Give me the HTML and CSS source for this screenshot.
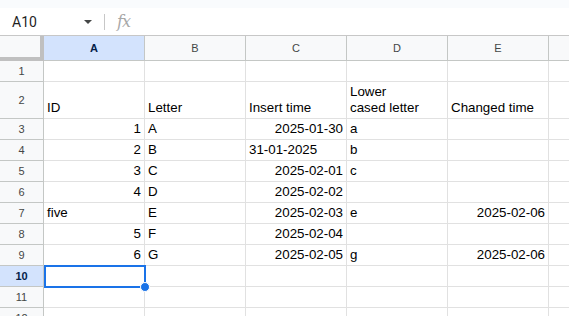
FILE: index.html
```html
<!DOCTYPE html>
<html>
<head>
<meta charset="utf-8">
<link rel="stylesheet" href="styles.css">
</head>
<body>
<div class="strip"></div>
<div class="fbar">
  <div class="namebox"><span class="ref">A10</span><span class="caret"></span></div>
  <div class="sep"></div>
  <div class="fx">fx</div>
</div>
<div class="sheet">
  <div class="corner"></div>
  <div class="ch sel">A</div><div class="ch">B</div><div class="ch">C</div><div class="ch">D</div><div class="ch">E</div><div class="ch"></div>

  <div class="rh">1</div><div class="c"></div><div class="c"></div><div class="c"></div><div class="c"></div><div class="c"></div><div class="c"></div>

  <div class="rh">2</div><div class="c">ID</div><div class="c">Letter</div><div class="c">Insert time</div><div class="c wrap">Lower<br>cased letter</div><div class="c">Changed time</div><div class="c"></div>

  <div class="rh">3</div><div class="c r">1</div><div class="c">A</div><div class="c r">2025-01-30</div><div class="c">a</div><div class="c"></div><div class="c"></div>
  <div class="rh">4</div><div class="c r">2</div><div class="c">B</div><div class="c">31-01-2025</div><div class="c">b</div><div class="c"></div><div class="c"></div>
  <div class="rh">5</div><div class="c r">3</div><div class="c">C</div><div class="c r">2025-02-01</div><div class="c">c</div><div class="c"></div><div class="c"></div>
  <div class="rh">6</div><div class="c r">4</div><div class="c">D</div><div class="c r">2025-02-02</div><div class="c"></div><div class="c"></div><div class="c"></div>
  <div class="rh">7</div><div class="c">five</div><div class="c">E</div><div class="c r">2025-02-03</div><div class="c">e</div><div class="c r">2025-02-06</div><div class="c"></div>
  <div class="rh">8</div><div class="c r">5</div><div class="c">F</div><div class="c r">2025-02-04</div><div class="c"></div><div class="c"></div><div class="c"></div>
  <div class="rh">9</div><div class="c r">6</div><div class="c">G</div><div class="c r">2025-02-05</div><div class="c">g</div><div class="c r">2025-02-06</div><div class="c"></div>
  <div class="rh sel">10</div><div class="c active"><div class="selbox"></div><div class="handle"></div></div><div class="c"></div><div class="c"></div><div class="c"></div><div class="c"></div><div class="c"></div>
  <div class="rh">11</div><div class="c"></div><div class="c"></div><div class="c"></div><div class="c"></div><div class="c"></div><div class="c"></div>
  <div class="rh">12</div><div class="c"></div><div class="c"></div><div class="c"></div><div class="c"></div><div class="c"></div><div class="c"></div>
</div>
</body>
</html>
```

FILE: styles.css
```css
html, body {
  margin: 0;
  padding: 0;
  background: #ffffff;
  overflow: hidden;
  width: 569px;
  height: 316px;
}
body {
  font-family: "Liberation Sans", Arial, sans-serif;
}
.strip {
  height: 8px;
  background: #f9fbfd;
}
.fbar {
  height: 27px;
  border-bottom: 1px solid #c7c7c7;
  display: flex;
  align-items: center;
  background: #ffffff;
}
.namebox {
  width: 104px;
  display: flex;
  align-items: center;
  box-sizing: border-box;
  padding-left: 12px;
}
.ref {
  font-family: Roboto, "Liberation Sans", sans-serif;
  font-size: 14px;
  color: #1f1f1f;
  flex: 1;
}
.caret {
  width: 0;
  height: 0;
  border-left: 4px solid transparent;
  border-right: 4px solid transparent;
  border-top: 4px solid #444746;
  margin-right: 12px;
}
.sep {
  width: 1px;
  height: 16px;
  background: #c7c7c7;
}
.fx {
  margin-left: 12px;
  font-family: "DejaVu Serif", "Liberation Serif", serif;
  font-style: italic;
  font-size: 16px;
  color: #a8a8a8;
  letter-spacing: -1px;
}
.sheet {
  display: grid;
  grid-template-columns: 44px repeat(6, 101px);
  grid-template-rows: 25px 21px 37px repeat(10, 21px);
}
.sheet > div {
  box-sizing: border-box;
}
.corner {
  background: #f8f9fa;
  border-right: 4px solid #c0c0c0;
  border-bottom: 4px solid #c0c0c0;
}
.ch {
  background: #f8f9fa;
  border-right: 1px solid #c4c7c5;
  border-bottom: 1px solid #c4c7c5;
  display: flex;
  align-items: center;
  justify-content: center;
  font-size: 11px;
  color: #444746;
  font-family: "Liberation Sans", Arial, sans-serif;
}
.rh {
  background: #f8f9fa;
  border-right: 1px solid #c4c7c5;
  border-bottom: 1px solid #c4c7c5;
  display: flex;
  align-items: center;
  justify-content: center;
  font-size: 11px;
  color: #444746;
}
.ch.sel, .rh.sel {
  background: #d3e3fd;
  color: #041e49;
  font-weight: bold;
}
.c {
  border-right: 1px solid #e1e1e1;
  border-bottom: 1px solid #e1e1e1;
  display: flex;
  align-items: flex-end;
  padding: 0 3px 2px 3px;
  font-size: 13.33px;
  line-height: 16px;
  color: #000000;
  white-space: nowrap;
  overflow: visible;
}
.c.r {
  justify-content: flex-end;
}
.c.wrap {
  line-height: 16px;
}
.active {
  position: relative;
}
.selbox {
  position: absolute;
  left: 0;
  top: -1px;
  width: 102px;
  height: 23px;
  border: 2px solid #1a73e8;
  box-sizing: border-box;
}
.handle {
  position: absolute;
  left: 96px;
  top: 16px;
  width: 10px;
  height: 10px;
  border-radius: 50%;
  background: #1a73e8;
  border: 1px solid #ffffff;
  box-sizing: border-box;
}
```
